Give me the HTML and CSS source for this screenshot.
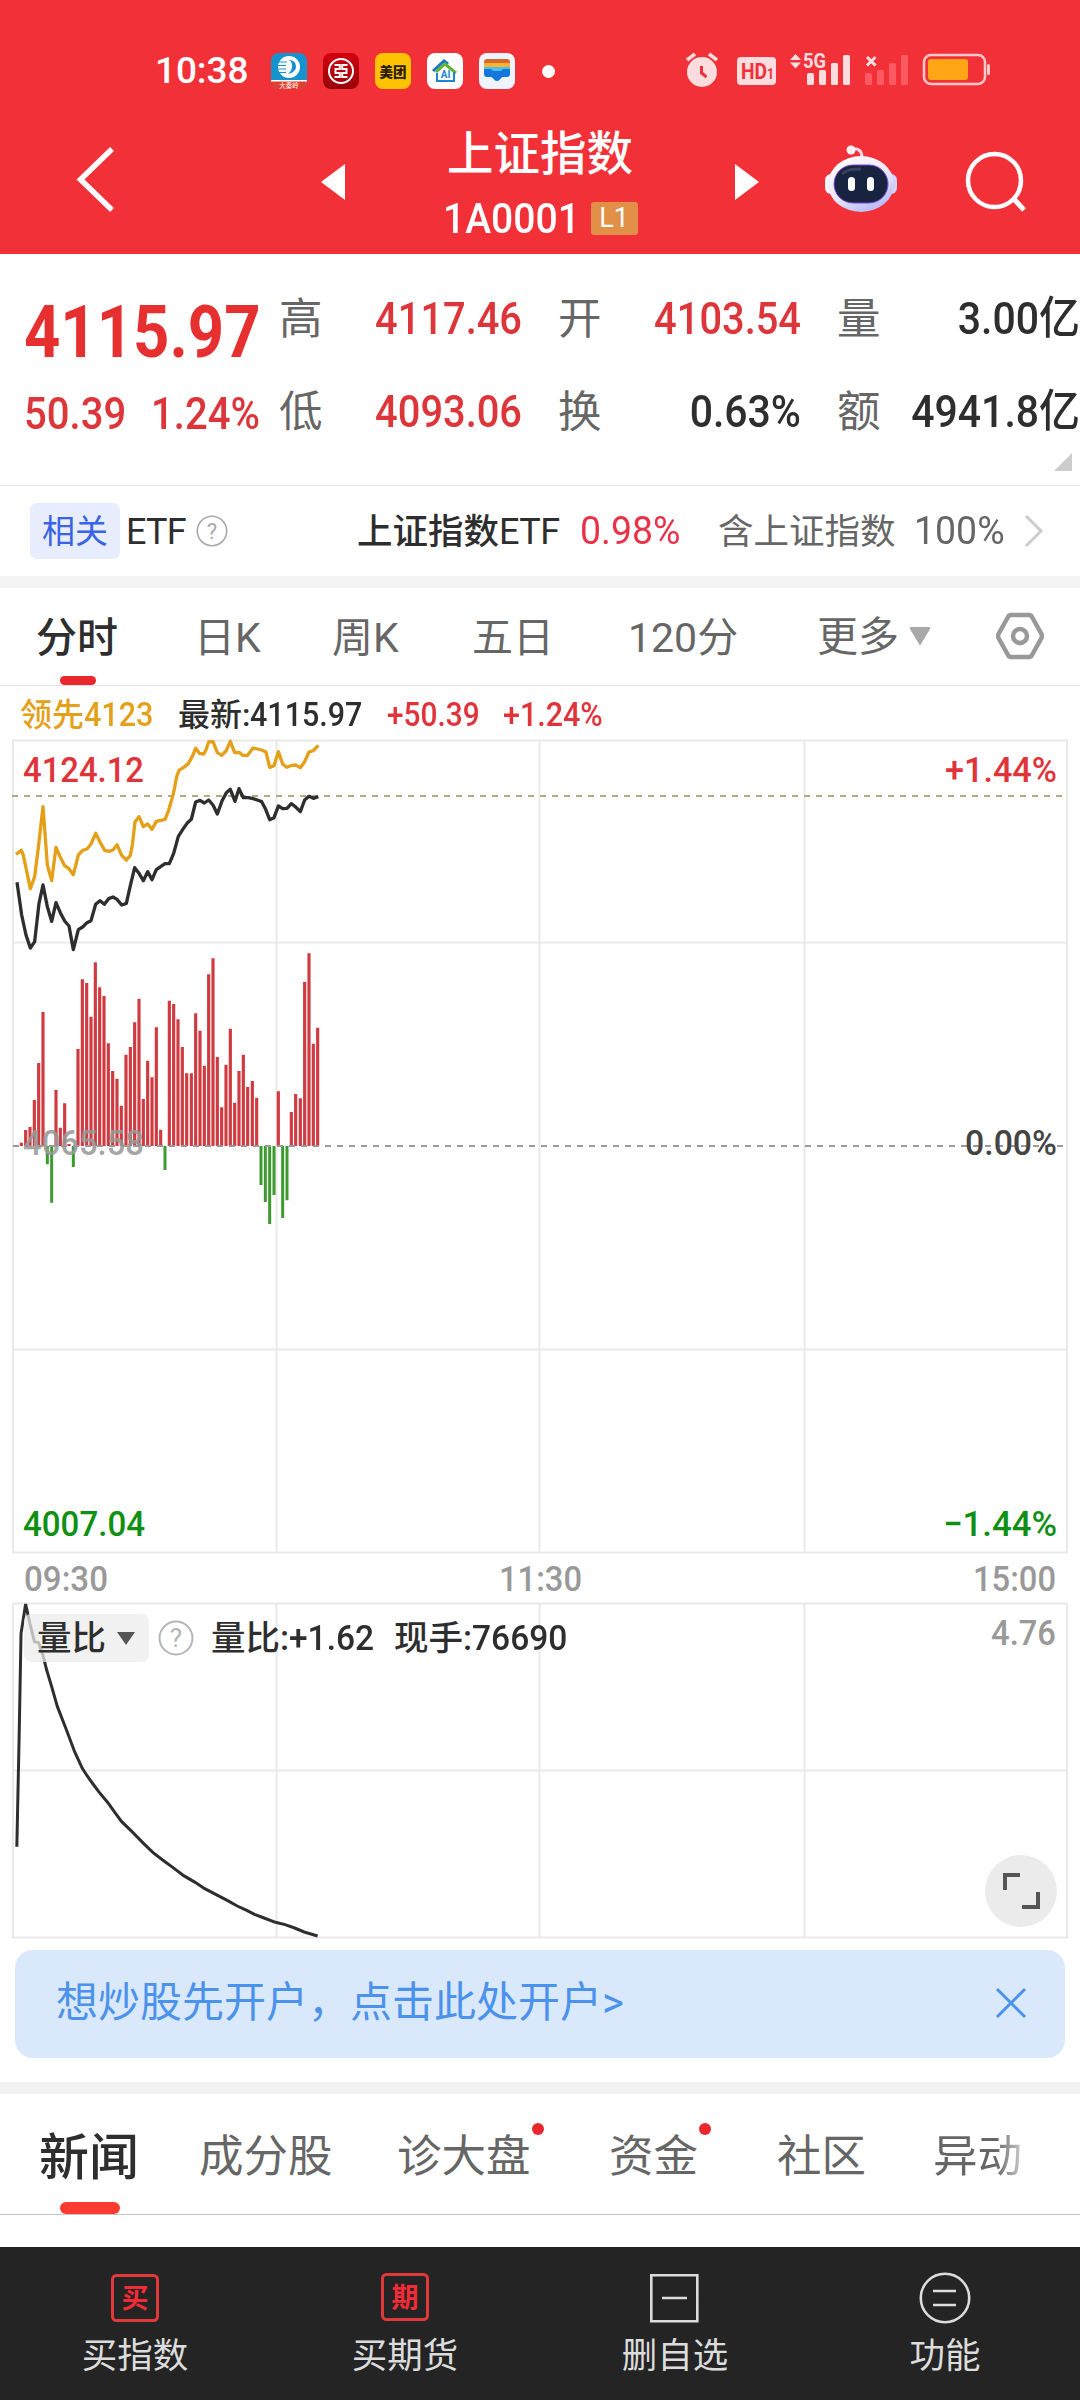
FILE: index.html
```html
<!DOCTYPE html>
<html lang="zh-CN">
<head>
<meta charset="utf-8">
<title>上证指数</title>
<link rel="stylesheet" href="styles.css">
</head>
<body>
<header class="header">
  <div class="status">
    <span class="clock">10:38</span>
    <div class="apps">
      <svg width="36" height="36" viewBox="0 0 36 36"><rect width="36" height="36" rx="8" fill="#1593cf"/><path d="M0 27h36v1a8 8 0 0 1-8 8H8a8 8 0 0 1-8-8z" fill="#e0402f"/><path d="M0 27.7h36" stroke="#fff" stroke-width="1.4"/><circle cx="18" cy="14" r="11" fill="#fff"/><path d="M18 7c6 0 7 4 7 7s-3 6-8 7c3-3 4-5 4-8s-1-5-3-6z" fill="#1593cf"/><path d="M6 9h10M6 12.500h9M6 16h9M7 19.500h8" stroke="#1593cf" stroke-width="1.100"/><text x="18" y="34.500" class="tiny" text-anchor="middle">大秦岭</text></svg>
      <svg width="36" height="36" viewBox="0 0 36 36"><defs><linearGradient id="bank" x2="0" y2="1"><stop stop-color="#d4000f"/><stop offset="1" stop-color="#980008"/></linearGradient></defs><rect width="36" height="36" rx="8" fill="url(#bank)"/><circle cx="18" cy="18" r="12" fill="none" stroke="#fff" stroke-width="2"/><path d="M11.500 12h5.300v4h-4.300v4h4.300v4h-5.300M24.500 12h-5.300v4h4.300v4h-4.300v4h5.300" fill="none" stroke="#fff" stroke-width="2"/></svg>
      <svg width="36" height="36" viewBox="0 0 36 36"><rect width="36" height="36" rx="8" fill="#fdc300"/><text x="18" y="23.500" class="meituan" text-anchor="middle" textLength="27" lengthAdjust="spacingAndGlyphs">美团</text></svg>
      <svg width="36" height="36" viewBox="0 0 36 36" fill="none" stroke-width="2"><rect width="36" height="36" rx="8" fill="#fff"/><path d="M6 18L17 8l4 3" stroke="#1878c8" stroke-width="3"/><path d="M9 19l9-8 11 9" stroke="#63b32e" stroke-width="3"/><path d="M10 20v8h17v-9" stroke="#1b87d0"/><text x="18.500" y="25" class="ai" text-anchor="middle">AI</text></svg>
      <svg width="36" height="36" viewBox="0 0 36 36"><rect width="36" height="36" rx="8" fill="#eef5ff"/><rect x="5" y="6" width="26" height="12" rx="3" fill="#d66a2a"/><path d="M5 10h26v8H5z" fill="#f9b233"/><path d="M5 14h26v5H5z" fill="#4ec0e8"/><path d="M5 16h6c2 0 2 2 4 2h6c2 0 2-2 4-2h6v5c0 2-1 3-3 3h-4c-2 0-3 4-6 4s-4-4-6-4H8c-2 0-3-1-3-3z" fill="#1477e0"/></svg>
    </div>
    <i class="more-dot"></i>
    <svg class="signals" width="312" height="44" viewBox="684 50 312 44">
      <g fill="#ffdcde"><circle cx="702" cy="73" r="15"/><path d="M687 61l8-6M717 61l-8-6" stroke="#ffdcde" stroke-width="3.500"/><path d="M701.500 67v7l5 4" fill="none" stroke="#f23038" stroke-width="3"/>
      <rect x="737" y="58" width="39" height="28" rx="4"/>
      <path d="M790 61l5.500-6 5.500 6zM790 63.500l5.500 6 5.500-6z"/>
      <text x="803" y="69" class="net" textLength="23" lengthAdjust="spacingAndGlyphs">5G</text>
      <rect x="807" y="74" width="7" height="12" rx="1.500"/><rect x="819" y="71" width="7" height="15" rx="1.500"/><rect x="831" y="64" width="7" height="22" rx="1.500"/><rect x="843" y="56" width="7" height="30" rx="1.500"/></g>
      <text x="741" y="80" class="hd" textLength="33" lengthAdjust="spacingAndGlyphs">HD<tspan class="hd1">1</tspan></text>
      <path d="M867 58l8.500 8.500m0-8.500l-8.500 8.500" stroke="#ffdcde" stroke-width="3"/>
      <g fill="#fb5a62"><rect x="865" y="74" width="7" height="12" rx="1.500"/><rect x="877" y="71" width="7" height="15" rx="1.500"/><rect x="889" y="64" width="7" height="22" rx="1.500"/><rect x="901" y="56" width="7" height="30" rx="1.500"/></g>
      <rect x="924" y="56" width="61" height="29" rx="7" fill="none" stroke="#ffc9cc" stroke-width="2.500"/><rect x="928" y="60" width="40" height="21" rx="3" fill="#ffa516"/><rect x="987" y="65" width="3" height="11" rx="1.500" fill="#ffc9cc"/>
    </svg>
  </div>
  <div class="titlebar">
    <svg class="back" width="40" height="70" viewBox="75 144 40 70"><path d="M112 149L80.500 179.500 112 210" fill="none" stroke="#fff" stroke-width="5.500"/></svg>
    <svg class="prev" width="24" height="36" viewBox="0 0 24 36"><path d="M24 0v36L0 18z" fill="#fff"/></svg>
    <div class="title">
      <h1>上证指数</h1>
      <div class="code"><span class="code-num">1A0001</span><span class="level">L1</span></div>
    </div>
    <svg class="next" width="24" height="36" viewBox="0 0 24 36"><path d="M0 0v36l24-18z" fill="#fff"/></svg>
    <svg class="robot" width="74" height="70" viewBox="824 145 74 70">
      <defs><linearGradient id="shell" x2=".6" y2="1"><stop stop-color="#fff"/><stop offset=".6" stop-color="#ece9fb"/><stop offset="1" stop-color="#b9bdf5"/></linearGradient></defs>
      <path d="M851 149c8-1 11 2 11 9" fill="none" stroke="#f6d9ea" stroke-width="3"/><circle cx="851" cy="150" r="4.500" fill="#fff0f5"/>
      <rect x="825" y="174" width="13" height="20" rx="6" fill="#f6f4ff"/><rect x="884" y="174" width="13" height="20" rx="6" fill="#d3d3fa"/>
      <ellipse cx="861" cy="184" rx="33" ry="28" fill="url(#shell)"/><rect x="834" y="165" width="54" height="38" rx="19" fill="#17233f" stroke="#7a4bd6" stroke-width="1"/>
      <path d="M842 174c5-5 12-5 19-5" stroke="#36435f" stroke-width="3" fill="none"/><rect x="848" y="177" width="7" height="14" rx="3.500" fill="#fff"/><rect x="867" y="177" width="7" height="14" rx="3.500" fill="#fff"/>
    </svg>
    <svg class="search" width="64" height="64" viewBox="964 150 64 64" fill="none" stroke="#fff" stroke-width="4.500"><circle cx="994.500" cy="180.500" r="26.500"/><path d="M1013 198l11 12" stroke-width="5"/></svg>
  </div>
</header>

<section class="quote">
  <div class="price">
    <div class="last"><span class="num">4115.97</span></div>
    <div class="change"><span class="num">50.39</span><span class="num">1.24%</span></div>
  </div>
  <dl class="stats">
    <dt>高</dt><dd class="up">4117.46</dd><dt>开</dt><dd class="up">4103.54</dd><dt>量</dt><dd>3.00<b>亿</b></dd>
    <dt>低</dt><dd class="up">4093.06</dd><dt>换</dt><dd>0.63%</dd><dt>额</dt><dd>4941.8<b>亿</b></dd>
  </dl>
  <i class="corner"></i>
</section>

<section class="etf">
  <span class="tag">相关</span><span class="etf-label">ETF</span>
  <svg class="help" width="32" height="32" viewBox="0 0 32 32"><circle cx="16" cy="16" r="14.700" fill="none" stroke="#aaa" stroke-width="1.600"/><text x="16" y="23.500" text-anchor="middle" class="q">?</text></svg>
  <span class="etf-name">上证指数<span class="latin">ETF</span></span><span class="etf-pct num">0.98%</span>
  <span class="etf-hold">含上证指数</span><span class="etf-weight num">100%</span>
  <svg class="chev" width="20" height="34" viewBox="0 0 20 34"><path d="M2 2l15 15L2 32" fill="none" stroke="#ccc" stroke-width="3"/></svg>
</section>

<nav class="periods">
  <span class="on">分时</span><span>日K</span><span>周K</span><span>五日</span><span>120分</span>
  <span class="more">更多<svg width="22" height="19" viewBox="0 0 22 19"><path d="M2 0h18q2 0 1 2l-9 15q-1 2-2 0L1 2Q0 0 2 0z" fill="#a8a8a8"/></svg></span>
  <svg class="gear" width="48" height="48" viewBox="0 0 48 48" fill="none" stroke="#999" stroke-width="4.500"><path d="M15 3h18q2 0 3 2l9.500 17q1 2 0 4L36 43q-1 2-3 2H15q-2 0-3-2L2.500 26q-1-2 0-4L12 5q1-2 3-2z"/><circle cx="24" cy="24" r="7"/></svg>
</nav>

<main class="charts">
  <svg class="plot" width="1080" height="1256" viewBox="0 686 1080 1256">
    <g class="grid">
      <path d="M13 740.500H1067V1552.500H13zM13 942.500H1067M13 1349.500H1067M276.500 740V1552M539.500 740V1552M804.500 740V1552"/>
      <path d="M13 1603.500H1067V1937.500H13zM13 1770.500H1067M276.500 1603V1937M539.500 1603V1937M804.500 1603V1937"/>
    </g>
    <path d="M12 796H1064" stroke="#b5ab82" stroke-width="2" stroke-dasharray="6 6"/>
    <path class="vol-up" transform="translate(0 930) scale(.33333)" d="M64 648V638M77 648V600M90 648V591M103 648V510M116 648V399M129 648V246M168 648V480M181 648V593M194 648V520M207 648V642M234 648V357M247 648V148M260 648V159M273 648V260M286 648V97M299 648V172M312 648V198M325 648V340M338 648V423M351 648V446M364 648V527M378 648V374M391 648V351M404 648V277M417 648V206M430 648V507M443 648V392M456 648V442M469 648V292M482 648V599M508 648V212M521 648V222M534 648V268M547 648V351M560 648V430M574 648V430M587 648V250M600 648V302M613 648V407M626 648V133M639 648V85M652 648V381M665 648V532M678 648V404M691 648V296M704 648V518M717 648V423M730 648V374M743 648V471M757 648V453M770 648V503M835 648V484M874 648V546M887 648V492M901 648V505M914 648V156M927 648V70M940 648V341M953 648V293"/>
    <path class="vol-down" transform="translate(0 930) scale(.33333)" d="M142 648V703M155 648V818M220 648V711M495 648V720M783 648V765M796 648V816M809 648V882M822 648V795M848 648V864M861 648V811"/>
    <path d="M13 1146H1067" stroke="#999" stroke-width="2" stroke-dasharray="6 6"/>
    <g transform="translate(0 730) scale(.33333)" fill="none" stroke-width="10" stroke-linejoin="round">
      <polyline stroke="#e5a01a" points="48,373 64,361 70,376 91,476 104,440 116,345 129,230 142,405 155,452 168,352 181,382 194,407 207,416 220,434 235,375 248,361 261,357 273,342 287,310 300,336 314,361 327,364 339,360 351,344 365,376 379,390 391,376 397,345 405,276 417,260 430,290 443,282 456,298 469,274 482,271 495,268 505,244 520,192 530,140 537,121 550,113 565,101 578,77 587,55 598,70 611,72 618,60 626,36 639,35 652,68 665,76 678,63 691,34 704,68 717,67 728,76 743,76 759,54 772,57 785,60 798,66 809,112 822,107 835,65 848,102 860,112 872,107 887,105 901,113 914,95 927,66 940,62 955,46"/>
      <polyline stroke="#2e2e2e" points="51,457 65,555 78,615 91,654 104,635 117,520 129,465 142,530 155,574 168,518 181,548 194,573 207,588 220,659 235,599 248,591 261,578 273,572 287,523 300,512 313,523 326,506 339,501 351,508 365,525 379,520 391,467 404,413 417,430 430,452 443,425 456,449 469,419 482,410 495,401 508,401 521,370 535,319 548,299 561,280 574,268 587,216 600,211 613,219 626,210 639,225 652,252 666,213 679,188 691,178 705,214 717,176 730,203 745,203 759,206 772,210 785,215 797,238 809,269 822,263 835,228 848,236 861,235 874,221 887,231 901,245 914,210 927,199 940,205 955,200"/>
    </g>
    <polyline transform="translate(0 1490) scale(.38265 .33333)" fill="none" stroke="#2e2e2e" stroke-width="3" vector-effect="non-scaling-stroke" points="44,1070 50,740 55,430 67,342 78,400 90,455 101,458 112,495 122,540 135,590 150,650 172,715 195,785 215,835 228,858 245,885 260,908 282,938 300,967 318,995 345,1025 375,1060 400,1088 425,1110 455,1135 480,1157 510,1177 535,1196 565,1214 595,1232 620,1248 645,1261 665,1273 690,1284 720,1297 745,1304 770,1314 795,1326 830,1338"/>
    <g class="axis">
      <text class="up" x="23" y="782" textLength="121" lengthAdjust="spacingAndGlyphs">4124.12</text>
      <text class="up" x="945" y="782" textLength="112" lengthAdjust="spacingAndGlyphs">+1.44%</text>
      <text class="mid" x="23" y="1155" textLength="121" lengthAdjust="spacingAndGlyphs">4065.58</text>
      <text class="zero" x="965" y="1155" textLength="92" lengthAdjust="spacingAndGlyphs">0.00%</text>
      <text class="down" x="23" y="1536" textLength="122" lengthAdjust="spacingAndGlyphs">4007.04</text>
      <text class="down" x="943" y="1536" textLength="114" lengthAdjust="spacingAndGlyphs">−1.44%</text>
      <text class="tick" x="24" y="1591" textLength="84" lengthAdjust="spacingAndGlyphs">09:30</text>
      <text class="tick" x="499" y="1591" textLength="83" lengthAdjust="spacingAndGlyphs">11:30</text>
      <text class="tick" x="973" y="1591" textLength="83" lengthAdjust="spacingAndGlyphs">15:00</text>
      <text class="tick" x="991" y="1645" textLength="65" lengthAdjust="spacingAndGlyphs">4.76</text>
    </g>
  </svg>
  <div class="legend">
    <span class="lead">领先<span class="num">4123</span></span><span class="latest">最新:<span class="num">4115.97</span></span><span class="num up diff">+50.39</span><span class="num up">+1.24%</span>
  </div>
  <div class="readout">
    <button class="picker">量比<svg width="20" height="13" viewBox="0 0 20 13"><path d="M1 0h18l-9 13z" fill="#555"/></svg></button>
    <svg class="help2" width="36" height="36" viewBox="0 0 36 36"><circle cx="18" cy="18" r="16.500" fill="none" stroke="#b5b5b5" stroke-width="2"/><text x="18" y="27" text-anchor="middle" class="q2">?</text></svg>
    <span class="ratio">量比:<span class="num">+1.62</span></span><span>现手:<span class="num">76690</span></span>
  </div>
  <button class="expand"><svg width="72" height="72" viewBox="985 1855 72 72" fill="none" stroke="#555" stroke-width="4"><path d="M1005 1890V1875H1020M1038 1892V1907H1022"/></svg></button>
</main>

<aside class="banner"><span>想炒股先开户，点击此处开户&gt;</span><svg width="32" height="32" viewBox="0 0 32 32"><path d="M2 2l28 28M30 2L2 30" stroke="#4a92ec" stroke-width="3"/></svg></aside>

<nav class="sections">
  <span class="on">新闻</span><span>成分股</span><span class="dot">诊大盘</span><span class="dot">资金</span><span>社区</span><span class="fade">异动</span>
</nav>

<footer class="actions">
  <div><svg width="52" height="52" viewBox="0 0 52 52"><rect x="3.500" y="3.500" width="45" height="45" rx="4" class="redbox"/><text x="26" y="36" text-anchor="middle" class="redtext">买</text></svg><span>买指数</span></div>
  <div><svg width="52" height="52" viewBox="0 0 52 52"><rect x="3.500" y="2.500" width="45" height="45" rx="4" class="redbox"/><text x="26" y="35" text-anchor="middle" class="redtext">期</text></svg><span>买期货</span></div>
  <div><svg width="52" height="52" viewBox="0 0 52 52" fill="none" stroke="#dcdcdc" stroke-width="2.600"><path d="M2.300 3.300h46v46h-46zM13 26h25"/></svg><span>删自选</span></div>
  <div><svg width="52" height="52" viewBox="0 0 52 52" fill="none" stroke="#dcdcdc" stroke-width="2.600"><circle cx="26" cy="26" r="24.200"/><path d="M14 19h23M14 33h23"/></svg><span>功能</span></div>
</footer>
</body>
</html>
```
FILE: styles.css
```css
* { box-sizing: border-box; margin: 0; padding: 0; }
body {
  width: 1080px; height: 2400px; background: #fff; color: #2e2e2e; overflow: hidden;
  display: flex; flex-direction: column;
  font-family: Roboto, "Noto Sans CJK SC", sans-serif;
}
svg { display: block; flex: none; }
button { border: 0; font: inherit; color: inherit; }
span, h1, dt, dd { white-space: nowrap; }
.num { display: inline-block; transform: scaleX(.91); transform-origin: left center; font-weight: 500; }
.up { color: #e0333a; fill: #e0333a; }

.header { height: 254px; background: #f23038; color: #fff; flex: none; }
.status { height: 108px; padding: 34px 0 0 155px; display: flex; align-items: center; }
.clock { width: 116px; font-size: 37px; font-weight: 500; line-height: 44px; letter-spacing: -.1px; }
.apps { display: flex; gap: 16px; width: 271px; }
.more-dot { width: 13px; height: 13px; border-radius: 50%; background: #fff; margin-right: 129px; }
.tiny { font-size: 6.500px; fill: #fff; }
.meituan { font-size: 14px; font-weight: 900; fill: #2b1d00; }
.ai { font-size: 10px; font-weight: 700; fill: #1b87d0; stroke: none; }
.net { font-size: 20px; font-weight: 700; }
.hd { font-size: 22px; font-weight: 700; fill: #f23038; }
.hd1 { font-size: 14px; }

.titlebar { height: 146px; display: flex; align-items: flex-start; padding-left: 75px; }
.back { margin-top: 36px; }
.prev { margin: 56px 0 0 206px; }
.title { width: 390px; display: flex; flex-direction: column; align-items: center; }
.title h1 { font-size: 46.500px; font-weight: 500; line-height: 56px; margin-top: 18px; }
.code { display: flex; align-items: center; height: 52px; margin-top: 10px; width: 195px; }
.code-num { font-size: 42px; font-weight: 500; width: 148px; transform: scaleX(.93); transform-origin: left center; }
.level { width: 47px; height: 33px; line-height: 33px; border-radius: 3px; background: #e28f47; text-align: center; font-size: 27px; }
.next { margin-top: 56px; }
.robot { margin: 37px 0 0 65px; }
.search { margin: 42px 0 0 66px; }

.quote { height: 232px; border-bottom: 1px solid #e4e4e4; display: flex; position: relative; flex: none; }
.price { width: 279px; padding: 38px 0 0 24px; color: #e6302f; }
.last { font-size: 73px; line-height: 80px; }
.last .num { transform: scaleX(.868); font-weight: 700; }
.change { display: flex; height: 60px; line-height: 60px; margin-top: 12px; font-size: 44.500px; color: #dc353a; }
.change .num { width: 127px; transform: scaleX(.9); }
.stats { display: grid; grid-template-columns: 44px 199px 80px 199px 80px 199px; grid-auto-rows: 93px; padding-top: 18px; align-content: start; line-height: 93px; }
.stats dt { font-size: 43.500px; line-height: 95px; color: #666; width: 44px; justify-self: end; }
.stats dt:nth-of-type(3n+1) { justify-self: start; }
.stats dd { font-size: 45px; font-weight: 500; text-align: right; transform: scaleX(.91); transform-origin: right center; }
.stats dd b { font-size: 45px; font-weight: 500; }
.stats dd.up { color: #dc353a; transform: scaleX(.885); }
.corner { position: absolute; right: 8px; bottom: 14px; width: 18px; height: 18px; background: #ccc; clip-path: polygon(100% 0, 100% 100%, 0 100%); }

.etf { height: 102px; border-bottom: 12px solid #f3f3f3; padding-left: 30px; display: flex; align-items: center; font-size: 35.500px; flex: none; }
.tag { width: 90px; height: 56px; border-radius: 7px; background: #e7edfc; color: #3a63e6; line-height: 58px; text-align: center; font-size: 33px; }
.etf-label { width: 70px; margin-left: 6px; font-size: 36px; letter-spacing: -.8px; padding-top: 2px; }
.q { font-size: 22px; fill: #aaa; }
.etf-name { width: 223px; margin-left: 129px; font-weight: 500; line-height: 50px; padding-top: 2px; }
.latin { font-weight: 400; font-size: 36px; letter-spacing: -.5px; }
.etf .num { font-size: 39px; font-weight: 400; }
.etf-pct { width: 138px; color: #e83248; }
.etf .etf-pct, .etf .etf-weight { transform: scaleX(.96); }
.etf-hold { width: 196px; color: #666; line-height: 50px; padding-top: 2px; }
.etf-weight { width: 110px; color: #666; }

.periods { height: 98px; border-bottom: 1px solid #e2e2e2; display: flex; position: relative; line-height: 100px; font-size: 41px; color: #666; padding-left: 36px; flex: none; }
.periods .on { width: 158px; color: #2e2e2e; font-weight: 500; position: relative; }
.periods .on::after { content: ""; position: absolute; left: 24px; bottom: 0; width: 36px; height: 9px; border-radius: 5px; background: #e8282d; }
.periods span:nth-child(2) { width: 138px; }
.periods span:nth-child(3) { width: 140px; }
.periods span:nth-child(4) { width: 156px; }
.periods span:nth-child(5) { width: 189px; }
.periods .more { width: 179px; display: flex; align-items: center; gap: 10px; }
.gear { margin-top: 24px; }

.charts { height: 1256px; position: relative; flex: none; }
.grid { fill: none; stroke: #e9e9e9; stroke-width: 2; }
.vol-up { stroke: #cf3b40; stroke-width: 9.500; }
.vol-down { stroke: #3c9a2e; stroke-width: 9; }
.axis { font-size: 35.500px; font-weight: 500; }
.axis .mid { fill: #999; fill-opacity: .9; }
.axis .zero { fill: #444; }
.axis .down { fill: #0f9013; }
.axis .tick { fill: #999; }
.legend { position: absolute; top: 0; left: 20px; height: 57px; line-height: 57px; display: flex; font-size: 32px; }
.legend .num { font-size: 33.500px; }
.lead { width: 158px; color: #e5a01a; font-weight: 500; }
.latest { width: 209px; font-weight: 500; }
.legend .diff { width: 116px; transform: scaleX(.89); }
.readout { position: absolute; top: 928px; left: 24px; height: 48px; line-height: 52px; display: flex; align-items: center; font-size: 34.500px; font-weight: 500; }
.readout .num { font-size: 35.500px; transform: scaleX(.945); }
.picker { width: 125px; height: 48px; border-radius: 7px; background: rgba(236, 236, 236, .75); display: flex; align-items: center; gap: 10px; padding-left: 13px; font-weight: 500; }
.help2 { margin: 0 17px 0 9px; }
.q2 { font-size: 26px; font-weight: 400; fill: #b5b5b5; }
.ratio { width: 183px; }
.expand { position: absolute; left: 985px; top: 1169px; width: 72px; height: 72px; border-radius: 50%; background: #ebebeb; }

.banner { height: 108px; margin: 8px 15px 24px; border-radius: 18px; background: #dae8fb; color: #4a92ec; font-size: 42px; line-height: 48px; display: flex; align-items: center; justify-content: space-between; padding: 0 38px 2px 41px; flex: none; }

.sections { height: 133px; border-top: 12px solid #f3f3f3; border-bottom: 1px solid #c4c4c4; display: flex; line-height: 126px; font-size: 44.500px; color: #666; padding-left: 39px; flex: none; }
.sections span { position: relative; height: 120px; }
.sections .on { font-size: 50px; line-height: 128px; font-weight: 500; color: #2e2e2e; width: 160px; }
.sections .on::after { content: ""; position: absolute; left: 21px; bottom: 0; width: 60px; height: 12px; border-radius: 6px; background: #ff3b30; }
.sections span:nth-child(2) { width: 198px; }
.sections span:nth-child(3) { width: 212px; }
.sections span:nth-child(4) { width: 168px; }
.sections span:nth-child(5) { width: 156px; }
.dot::after { content: ""; position: absolute; left: 135px; top: 29px; width: 12px; height: 12px; border-radius: 50%; background: #e8282d; }
.sections span:nth-child(4)::after { left: 90px; }
.fade { background: linear-gradient(90deg, #666 70%, #ccc); -webkit-background-clip: text; background-clip: text; color: transparent; }

.actions { margin-top: 32px; height: 153px; background: #242424; color: #dcdcdc; display: grid; grid-template-columns: repeat(4, 270px); font-size: 35.500px; flex: none; }
.actions div { display: flex; flex-direction: column; align-items: center; padding-top: 25px; }
.actions span { line-height: 44px; margin-top: 10px; }
.redbox { fill: none; stroke: #e2383c; stroke-width: 3; }
.redtext { font-size: 27px; font-weight: 700; fill: #f22b36; }
```
